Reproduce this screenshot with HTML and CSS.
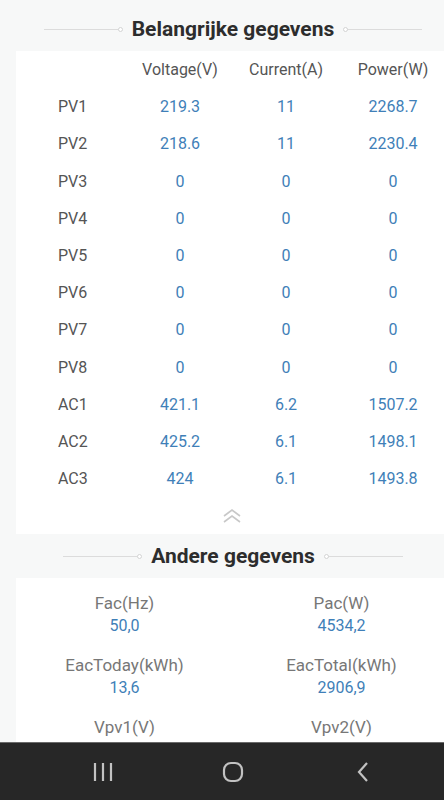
FILE: index.html
```html
<!DOCTYPE html>
<html>
<head>
<meta charset="utf-8">
<link rel="stylesheet" href="styles.css">
</head>
<body>
<div class="page">
  <div class="sec-head head1">
    <span class="line left"></span>
    <h2>Belangrijke gegevens</h2>
    <span class="line right"></span>
  </div>
  <div class="card table-card">
    <div class="grid">
      <div class="lbl"></div><div class="th">Voltage(V)</div><div class="th">Current(A)</div><div class="th">Power(W)</div>
      <div class="lbl">PV1</div><div class="v">219.3</div><div class="v">11</div><div class="v">2268.7</div>
      <div class="lbl">PV2</div><div class="v">218.6</div><div class="v">11</div><div class="v">2230.4</div>
      <div class="lbl">PV3</div><div class="v">0</div><div class="v">0</div><div class="v">0</div>
      <div class="lbl">PV4</div><div class="v">0</div><div class="v">0</div><div class="v">0</div>
      <div class="lbl">PV5</div><div class="v">0</div><div class="v">0</div><div class="v">0</div>
      <div class="lbl">PV6</div><div class="v">0</div><div class="v">0</div><div class="v">0</div>
      <div class="lbl">PV7</div><div class="v">0</div><div class="v">0</div><div class="v">0</div>
      <div class="lbl">PV8</div><div class="v">0</div><div class="v">0</div><div class="v">0</div>
      <div class="lbl">AC1</div><div class="v">421.1</div><div class="v">6.2</div><div class="v">1507.2</div>
      <div class="lbl">AC2</div><div class="v">425.2</div><div class="v">6.1</div><div class="v">1498.1</div>
      <div class="lbl">AC3</div><div class="v">424</div><div class="v">6.1</div><div class="v">1493.8</div>
    </div>
    <div class="collapse">
      <svg width="20" height="14" viewBox="0 0 20 14"><path d="M2 7 L10 1 L18 7 M2 13 L10 7 L18 13" fill="none" stroke="#c8c8c8" stroke-width="1.6"/></svg>
    </div>
  </div>
  <div class="sec-head head2">
    <span class="line left"></span>
    <h2>Andere gegevens</h2>
    <span class="line right"></span>
  </div>
  <div class="card other">
    <div class="item"><div class="k">Fac(Hz)</div><div class="val">50,0</div></div>
    <div class="item"><div class="k">Pac(W)</div><div class="val">4534,2</div></div>
    <div class="item"><div class="k">EacToday(kWh)</div><div class="val">13,6</div></div>
    <div class="item"><div class="k">EacTotal(kWh)</div><div class="val">2906,9</div></div>
    <div class="item"><div class="k">Vpv1(V)</div><div class="val">0</div></div>
    <div class="item"><div class="k">Vpv2(V)</div><div class="val">0</div></div>
  </div>
</div>
<nav class="navbar">
  <div class="slot"><svg width="20" height="20" viewBox="0 0 20 20"><path d="M2 1v18M10 1v18M18 1v18" stroke="#c2c2c2" stroke-width="2.2" fill="none"/></svg></div>
  <div class="slot"><svg width="22" height="22" viewBox="0 0 22 22"><rect x="2" y="2" width="18" height="18" rx="7" fill="none" stroke="#c2c2c2" stroke-width="2.2"/></svg></div>
  <div class="slot"><svg width="14" height="22" viewBox="0 0 14 22"><path d="M11 2 L3 11 L11 20" fill="none" stroke="#c2c2c2" stroke-width="2.2"/></svg></div>
</nav>
</body>
</html>
```
FILE: styles.css
```css
html, body {
  margin: 0;
  padding: 0;
}
body {
  width: 444px;
  height: 800px;
  overflow: hidden;
  background: #f7f8f8;
  font-family: Roboto, "Noto Sans", Arial, sans-serif;
}
.page {
  margin-left: 16px;
  width: 434px;
  padding-top: 7px;
}
.sec-head {
  height: 44px;
  display: flex;
  align-items: center;
  justify-content: center;
  gap: 12px;
  background: #f7f8f8;
}
.sec-head h2 {
  margin: 0;
  font-size: 21px;
  font-weight: 700;
  color: #2d2d2d;
  line-height: 24px;
}
.line {
  display: block;
  width: 76px;
  height: 1px;
  background: #dcdcdc;
  position: relative;
}
.line.left::after,
.line.right::before {
  content: "";
  position: absolute;
  top: -2px;
  width: 3px;
  height: 3px;
  border: 1px solid #d4d4d4;
  border-radius: 50%;
  background: #fff;
}
.line.left::after { right: -3px; }
.line.right::before { left: -3px; }
.card {
  background: #fff;
}
.grid {
  display: grid;
  grid-template-columns: 111px 106px 106px 108px;
  grid-auto-rows: 37.2px;
  align-items: center;
  font-size: 16px;
}
.lbl {
  padding-left: 42px;
  color: #555;
}
.th {
  text-align: center;
  color: #555;
}
.v {
  text-align: center;
  color: #3f7fb8;
}
.collapse {
  height: 37px;
  display: flex;
  justify-content: center;
  align-items: center;
  margin-left: -2px;
}
.other {
  display: grid;
  grid-template-columns: 1fr 1fr;
  padding-top: 14px;
  row-gap: 18px;
  height: 200px;
  align-content: start;
}
.item {
  text-align: center;
}
.k {
  font-size: 17px;
  line-height: 23px;
  color: #777;
}
.val {
  font-size: 16px;
  line-height: 21px;
  color: #3f7fb8;
}
.navbar {
  position: fixed;
  left: 0;
  bottom: 0;
  width: 444px;
  height: 58px;
  background: #272727;
  border-top: 1px solid #6a6a6a;
  display: grid;
  grid-template-columns: 130px 130px 130px;
  align-items: center;
  padding-left: 38px;
  box-sizing: border-box;
}
.slot {
  display: flex;
  justify-content: center;
  align-items: center;
}
```
